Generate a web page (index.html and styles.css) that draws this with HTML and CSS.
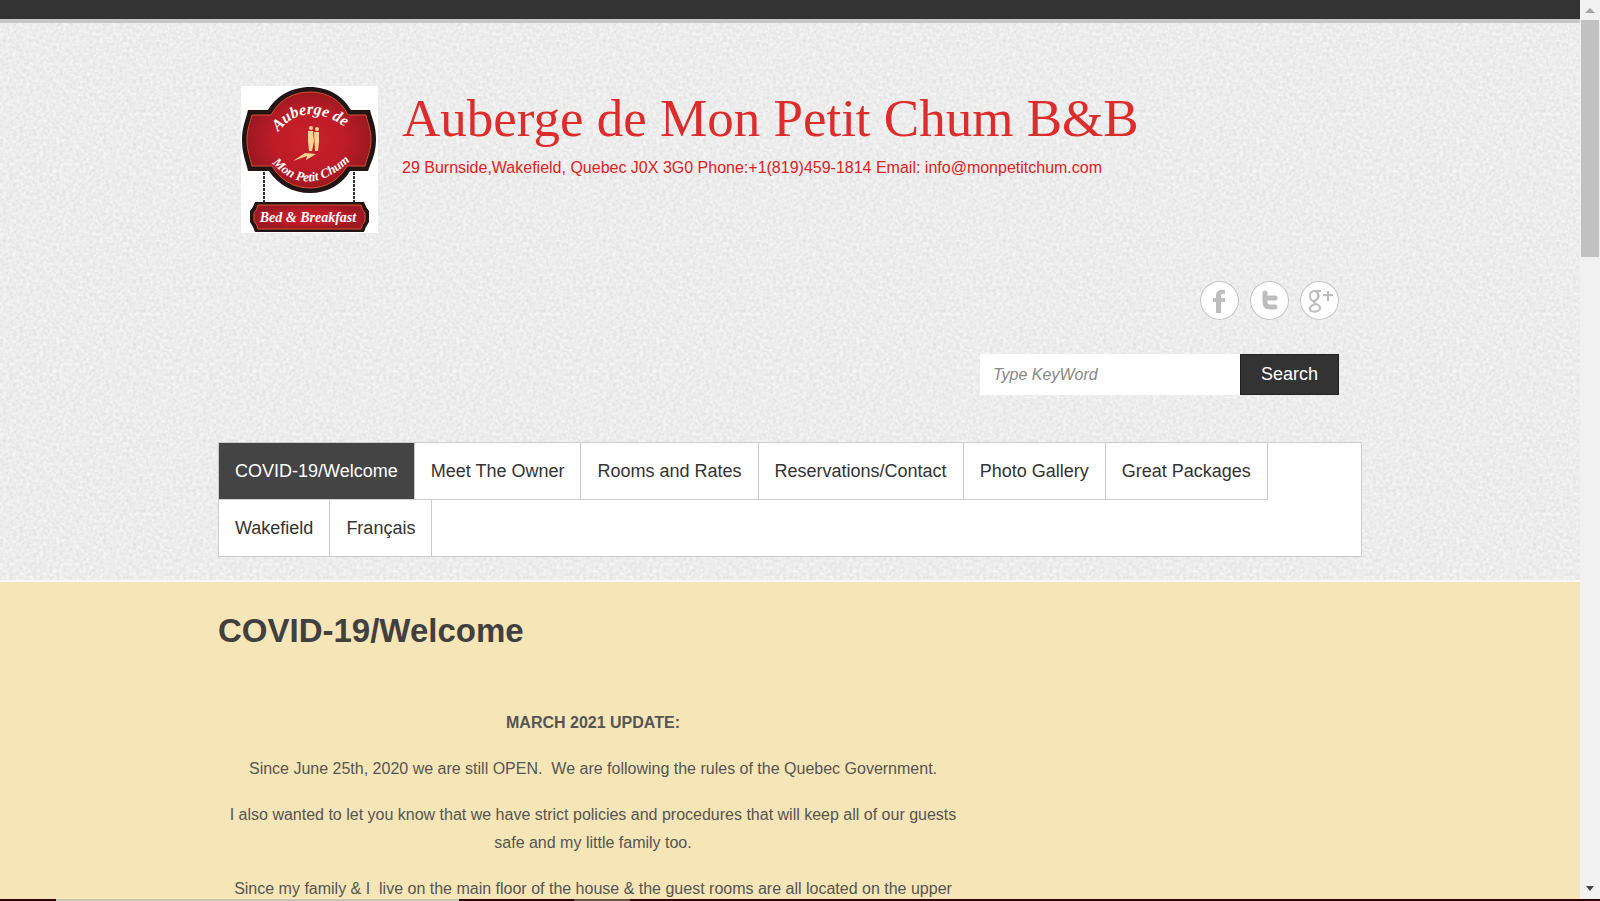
FILE: index.html
```html
<!DOCTYPE html>
<html lang="en">
<head>
<meta charset="utf-8">
<meta name="viewport" content="width=device-width, initial-scale=1">
<title>COVID-19/Welcome | Auberge de Mon Petit Chum B&amp;B</title>
<link rel="stylesheet" href="styles.css">
</head>
<body>
<div class="window">
  <div class="page">
    <div class="topbar"></div>
    <header class="site-header">
      <div class="container">
        <div class="branding">
          <a class="logo" href="#" aria-label="Auberge de Mon Petit Chum home">
            <svg viewBox="0 0 137 147" width="137" height="147">
              <defs>
                <radialGradient id="red"><stop offset="0" stop-color="#c9202c"/><stop offset=".6" stop-color="#bd1c28"/><stop offset="1" stop-color="#9c1822"/></radialGradient>
                <path id="arcTop" d="M37 46Q66 10 112 47"/>
                <path id="arcBottom" d="M31 77Q68 117 114 70"/>
              </defs>
              <rect width="137" height="147" fill="#fff"/>
              <path d="M23 82V116M113 82V116" stroke="#333" stroke-width="2" stroke-dasharray="3 1"/>
              <path d="M7 24H27C35 10 51 1 69 1S102 10 110 24H129C131 33 135 39 135 53S131 74 127 85H109C101 99 86 107 69 107S37 99 28 85H7C5 75 1 68 1 54S5 34 7 24Z" fill="#231416"/>
              <path d="M11 29H30C38 14 52 6 69 6S100 14 107 29H125C127 38 130 43 130 54S126 71 124 80H106C98 94 85 102 69 102S39 94 31 80H11C9 71 6 65 6 54S9 37 11 29Z" fill="url(#red)" stroke="#d9502b" stroke-width="1"/>
              <g fill="#f7d394"><circle cx="70" cy="42" r="2"/><path d="M67 45H72L73 55 71 65H68L67 55Z"/><circle cx="76" cy="43" r="2"/><path d="M73 46H78L78 56 77 65H74Z"/><path d="M52 75L64 67 75 68 65 74 66 70Z"/></g>
              <g class="logo-text" fill="#fff">
                <text font-size="16"><textPath href="#arcTop">Auberge de</textPath></text>
                <text font-size="13"><textPath href="#arcBottom">Mon Petit Chum</textPath></text>
              </g>
              <path d="M14 116H123Q125 122 128 125V136Q125 140 123 146H14Q12 140 9 136V125Q12 122 14 116Z" fill="#231416"/>
              <path d="M17 119H120Q121 124 124 127V135Q121 138 120 143H17Q16 138 13 135V127Q16 124 17 119Z" fill="url(#red)" stroke="#d9502b"/>
              <text class="logo-text" x="67" y="136" text-anchor="middle" font-size="14" fill="#fff">Bed &amp; Breakfast</text>
            </svg>
          </a>
          <div class="site-names">
            <div class="site-title"><a href="#">Auberge de Mon Petit Chum B&amp;B</a></div>
            <p class="tagline">29 Burnside,Wakefield, Quebec J0X 3G0 Phone:+1(819)459-1814 Email: info@monpetitchum.com</p>
          </div>
        </div>
        <div class="tools">
          <div class="social">
            <a href="#" aria-label="Facebook"><svg viewBox="0 0 39 39"><path d="M16 32V21H13V17H16V15C16 10 19 8 25 9V13C22 12 21 13 21 15V17H25V21H21V32Z"/></svg></a>
            <a href="#" aria-label="Twitter"><svg viewBox="0 0 39 39"><path d="M15 12V21Q15 26 20 26H25M15 17H25" class="thick"/></svg></a>
            <a href="#" aria-label="Google Plus"><svg viewBox="0 0 39 39"><g class="thin"><ellipse cx="14" cy="15" rx="4" ry="5"/><path d="M14 10H21M17 11Q21 16 16 19Q11 21 16 23Q21 25 20 28Q17 32 11 30Q7 26 15 23"/></g><path d="M23 14H33M28 10V20" class="plus"/></svg></a>
          </div>
          <form class="search">
            <input type="search" aria-label="Search keyword" placeholder="Type KeyWord">
            <button type="button">Search</button>
          </form>
        </div>
        <nav class="menu" aria-label="Main">
          <a class="current" href="#">COVID-19/Welcome</a>
          <a href="#">Meet The Owner</a>
          <a href="#">Rooms and Rates</a>
          <a href="#">Reservations/Contact</a>
          <a href="#">Photo Gallery</a>
          <a href="#">Great Packages</a>
          <a href="#">Wakefield</a>
          <a href="#">Français</a>
        </nav>
      </div>
    </header>
    <main class="content">
      <div class="container">
        <h1>COVID-19/Welcome</h1>
        <article>
          <p><strong>MARCH 2021 UPDATE:</strong></p>
          <p>Since June 25th, 2020 we are still OPEN.&nbsp; We are following the rules of the Quebec Government.</p>
          <p>I also wanted to let you know that we have strict policies and procedures that will keep all of our guests safe and my little family too.</p>
          <p>Since my family &amp; I&nbsp; live on the main floor of the house &amp; the guest rooms are all located on the upper</p>
        </article>
      </div>
    </main>
  </div>
  <div class="scrollbar" aria-hidden="true">
    <svg viewBox="0 0 20 20"><path d="M5 13L10 8 15 13Z" fill="#a3a3a3"/></svg>
    <div class="thumb"></div>
    <svg viewBox="0 0 20 20"><path d="M6 7H14L10 12Z" fill="#444"/></svg>
  </div>
</div>
<div class="desktop-edge"></div>
</body>
</html>
```
FILE: styles.css
```css
* { box-sizing: border-box; }
body {
  margin: 0;
  height: 100vh;
  overflow: hidden;
  display: flex;
  flex-direction: column;
  font-family: "Liberation Sans", Arial, sans-serif;
  font-size: 16px;
  color: #555;
}
a { color: inherit; text-decoration: none; }
.window { flex: 1; min-height: 0; display: flex; }
.page { flex: 1; min-width: 0; overflow: hidden; background: #f6e5b6; }
.topbar { height: 23px; background: #333; border-bottom: 4px solid #c6c6c6; }
.container { max-width: 1144px; margin: 0 auto; }
.site-header {
  padding: 63px 0 23px;
  border-bottom: 2px solid #fafafa;
  background: #ededed url("data:image/svg+xml,%3Csvg xmlns='http://www.w3.org/2000/svg' width='200' height='200'%3E%3Cfilter id='n' x='0' y='0' width='1' height='1' color-interpolation-filters='sRGB'%3E%3CfeTurbulence type='fractalNoise' baseFrequency='.3' numOctaves='3' stitchTiles='stitch'/%3E%3CfeColorMatrix values='.12 0 0 0 .868 .12 0 0 0 .868 .12 0 0 0 .868 0 0 0 0 1'/%3E%3C/filter%3E%3Crect width='200' height='200' filter='url(%23n)'/%3E%3C/svg%3E");
}
.branding { display: flex; gap: 24px; padding: 0 23px; }
.logo { display: block; height: 147px; }
.logo svg { display: block; }
.logo-text { font-family: "Liberation Serif", serif; font-style: italic; font-weight: bold; }
.site-title { font: 53px/64px "Liberation Serif", "Times New Roman", serif; color: #dd2c2c; }
.tagline { margin: 4px 0 0; line-height: 28px; color: #dd2222; }
.tools { display: flex; flex-direction: column; align-items: flex-end; gap: 34px; padding: 48px 23px 47px; }
.social { display: flex; gap: 11px; }
.social a { width: 39px; height: 39px; border-radius: 50%; background: #fff; box-shadow: inset 0 0 0 1px #c4c4c4; }
.social svg { display: block; width: 100%; height: 100%; fill: #bdbdbd; }
.social .thick { fill: none; stroke: #bdbdbd; stroke-width: 5; stroke-linecap: round; }
.social .thin { fill: none; stroke: #bdbdbd; stroke-width: 2; }
.social .plus { fill: none; stroke: #bdbdbd; stroke-width: 2; }
.search { display: flex; height: 41px; }
.search input { width: 260px; border: 0; padding: 0 13px; background: #fff; font: italic 16px "Liberation Sans", Arial, sans-serif; }
.search input::placeholder { color: #888; }
.search button { width: 99px; border: 1px solid #222; background: #333; color: #fff; font: 18px "Liberation Sans", Arial, sans-serif; }
.menu { display: flex; flex-wrap: wrap; border: 1px solid #ccc; background: #fff; font-size: 18px; line-height: 56px; color: #333; }
.menu a { padding: 0 16px; border-right: 1px solid #ccc; border-bottom: 1px solid #ccc; }
.menu a:nth-child(n+7) { border-bottom: 0; }
.menu .current { background: #444; color: #fff; }
h1 { margin: 0; padding: 27px 0 56px; font-size: 33px; line-height: 44px; color: #404040; }
article { max-width: 750px; text-align: center; line-height: 28px; }
article p { margin: 0 0 18px; }
.scrollbar { width: 20px; display: flex; flex-direction: column; background: #f1f1f1; }
.scrollbar svg { width: 20px; height: 20px; }
.thumb { height: 237px; margin: 0 1px auto; background: #c1c1c1; }
.desktop-edge { height: 2px; background: linear-gradient(90deg, #300008 0 56px, #c9c6b8 56px 459px, #300008 459px 574px, #66504c 574px 630px, #300008 630px); }
```
